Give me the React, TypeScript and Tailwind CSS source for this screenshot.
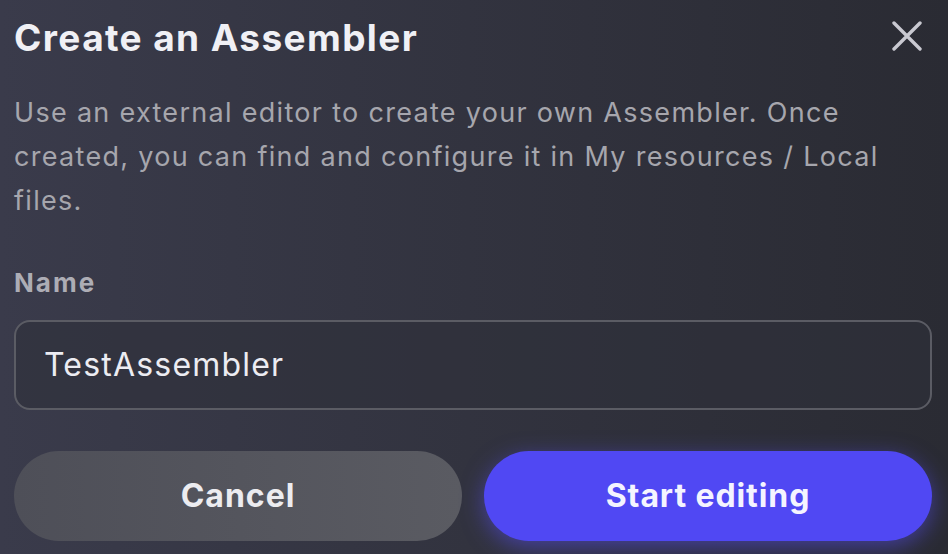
const App = () => {
  return (
    <div className="w-[948px] h-[554px] overflow-hidden bg-gradient-to-r from-[#3a3b4b] to-[#2a2b33] font-['Inter',sans-serif] pl-[14px] pr-[16px]">
      <div className="flex items-center justify-between pt-[14px] h-[60px]">
        <h1 className="text-[37px] font-bold text-[#f0f0f5] tracking-[1.4px] leading-none">
          Create an Assembler
        </h1>
        <button className="text-[#c9c9d1] mr-[10px] -mt-[2px]">
          <svg width="30" height="30" viewBox="0 0 30 30" fill="none" stroke="currentColor" strokeWidth="3.4" strokeLinecap="round">
            <path d="M2 2L28 28M28 2L2 28" />
          </svg>
        </button>
      </div>

      <p className="mt-[31px] text-[27px] leading-[44px] tracking-[1.3px] text-[#a6a6ad]">
        Use an external editor to create your own Assembler. Once created, you can find and configure it in My
        resources / Local files.
      </p>

      <label className="block mt-[47px] text-[26px] font-bold tracking-[2px] text-[#adadb5] leading-none">Name</label>

      <div className="mt-[24px] h-[90px] rounded-[16px] border-2 border-[#5b5c64] bg-[#2f303b]/60 flex items-center px-[28px]">
        <span className="text-[32px] tracking-[1.2px] text-[#ececf2]">TestAssembler</span>
      </div>

      <div className="mt-[41px] flex gap-[22px]">
        <button className="flex-1 h-[90px] rounded-full bg-gradient-to-r from-[#4e4f58] to-[#5a5b62] text-[32px] font-bold tracking-[1px] text-[#ececf0]">
          Cancel
        </button>
        <button className="flex-1 h-[90px] rounded-full bg-[#5048f3] text-[32px] font-bold tracking-[0.9px] text-[#f4f4ff] shadow-[0_6px_22px_rgba(90,80,255,0.5)]">
          Start editing
        </button>
      </div>
    </div>
  )
}

export default App
